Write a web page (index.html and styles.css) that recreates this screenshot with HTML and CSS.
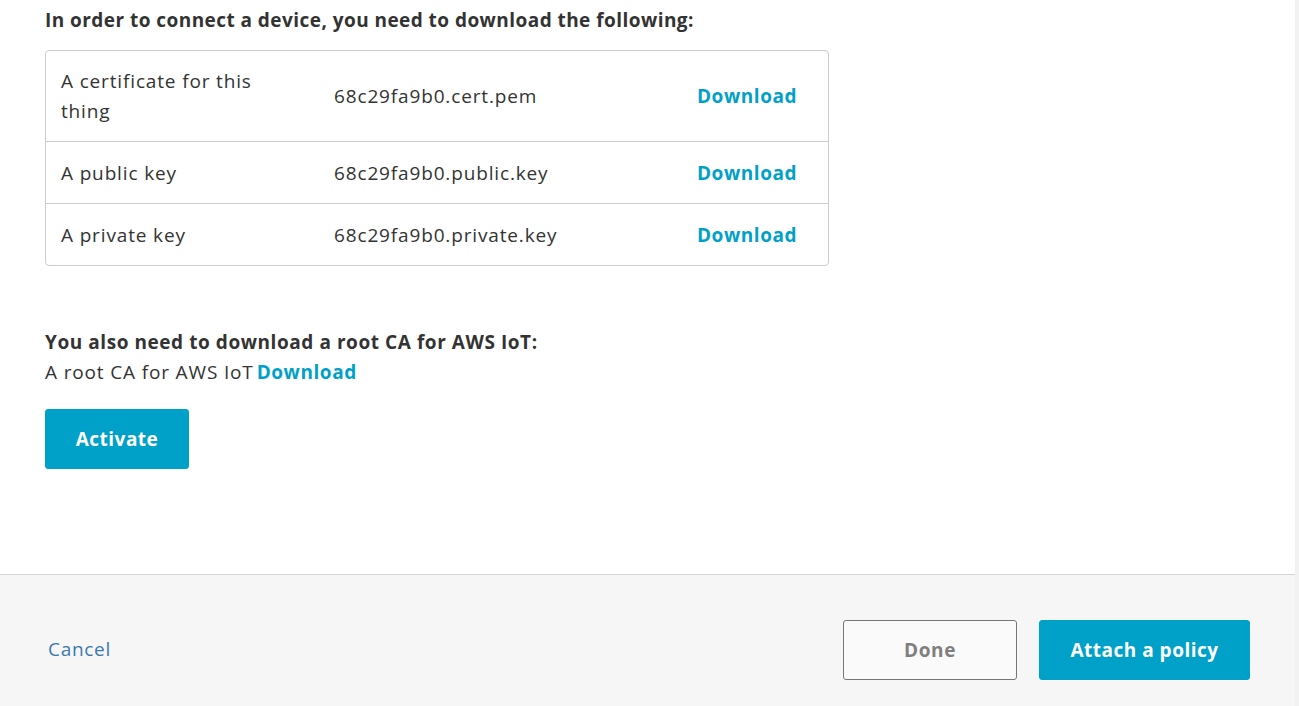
FILE: index.html
```html
<!DOCTYPE html>
<html>
<head>
<meta charset="utf-8">
<link rel="stylesheet" href="styles.css">
</head>
<body>
<div class="page">
  <main class="content">
    <h2 class="heading">In order to connect a device, you need to download the following:</h2>
    <div class="files">
      <div class="row row-tall">
        <div class="c-label">A certificate for this thing</div>
        <div class="c-file">68c29fa9b0.cert.pem</div>
        <div class="c-action"><a class="link">Download</a></div>
      </div>
      <div class="row">
        <div class="c-label">A public key</div>
        <div class="c-file">68c29fa9b0.public.key</div>
        <div class="c-action"><a class="link">Download</a></div>
      </div>
      <div class="row">
        <div class="c-label">A private key</div>
        <div class="c-file">68c29fa9b0.private.key</div>
        <div class="c-action"><a class="link">Download</a></div>
      </div>
    </div>
    <h3 class="subheading">You also need to download a root CA for AWS IoT:</h3>
    <p class="root">A root CA for AWS IoT<a class="link root-link">Download</a></p>
    <button class="btn btn-primary btn-activate">Activate</button>
  </main>
  <footer class="footer">
    <a class="cancel">Cancel</a>
    <div class="actions">
      <button class="btn btn-secondary">Done</button>
      <button class="btn btn-primary btn-attach">Attach a policy</button>
    </div>
  </footer>
</div>
</body>
</html>
```
FILE: styles.css
```css
html, body {
  margin: 0;
  padding: 0;
  height: 100%;
}
body {
  font-family: "Open Sans", "Noto Sans", sans-serif;
  color: #333;
  background: #f2f2f2;
}
.page {
  width: 1295px;
  height: 706px;
  display: flex;
  flex-direction: column;
  background: #fff;
}
.content {
  flex: 1;
  padding: 6px 45px 0 45px;
  display: flex;
  flex-direction: column;
  align-items: flex-start;
}
.heading {
  margin: 0;
  font-size: 19px;
  font-weight: 700;
  line-height: 28px;
  letter-spacing: 0.45px;
  color: #333;
}
.files {
  margin-top: 16px;
  width: 782px;
  border: 1px solid #ccc;
  border-radius: 4px;
}
.row {
  display: grid;
  grid-template-columns: 273px 363px 1fr;
  align-items: center;
  height: 61px;
  padding-left: 15px;
  font-size: 19px;
  letter-spacing: 0.85px;
  border-top: 1px solid #ccc;
}
.row:first-child {
  border-top: none;
}
.row-tall {
  height: 90px;
}
.c-label {
  width: 230px;
  line-height: 30px;
}
.link {
  color: #00a1c9;
  font-weight: 700;
  letter-spacing: 0.55px;
  cursor: pointer;
}
.root-link {
  margin-left: 3px;
}
.subheading {
  margin: 62px 0 0 0;
  font-size: 19px;
  font-weight: 700;
  line-height: 28px;
  letter-spacing: 0.56px;
}
.root {
  margin: 2px 0 0 0;
  font-size: 19px;
  line-height: 28px;
  letter-spacing: 0.85px;
}
.btn {
  font-family: "Open Sans", "Noto Sans", sans-serif;
  font-size: 19px;
  font-weight: 700;
  letter-spacing: 0.5px;
  border-radius: 3px;
  cursor: pointer;
}
.btn-primary {
  background: #00a1c9;
  color: #fff;
  border: 1px solid #00a1c9;
}
.btn-activate {
  margin-top: 23px;
  width: 144px;
  height: 60px;
}
.footer {
  box-sizing: border-box;
  height: 132px;
  border-top: 1px solid #d5d5d5;
  background: #f6f6f6;
  display: flex;
  align-items: center;
  justify-content: space-between;
  padding: 16px 45px 0 48px;
}
.cancel {
  color: #3a79b0;
  font-size: 19px;
  letter-spacing: 0.7px;
  cursor: pointer;
}
.actions {
  display: flex;
  gap: 22px;
  padding-top: 2px;
}
.btn-secondary {
  width: 174px;
  height: 60px;
  background: #fafafa;
  color: #7f7f7f;
  border: 1px solid #767676;
  letter-spacing: 0.6px;
}
.btn-attach {
  width: 211px;
  height: 60px;
}
```
